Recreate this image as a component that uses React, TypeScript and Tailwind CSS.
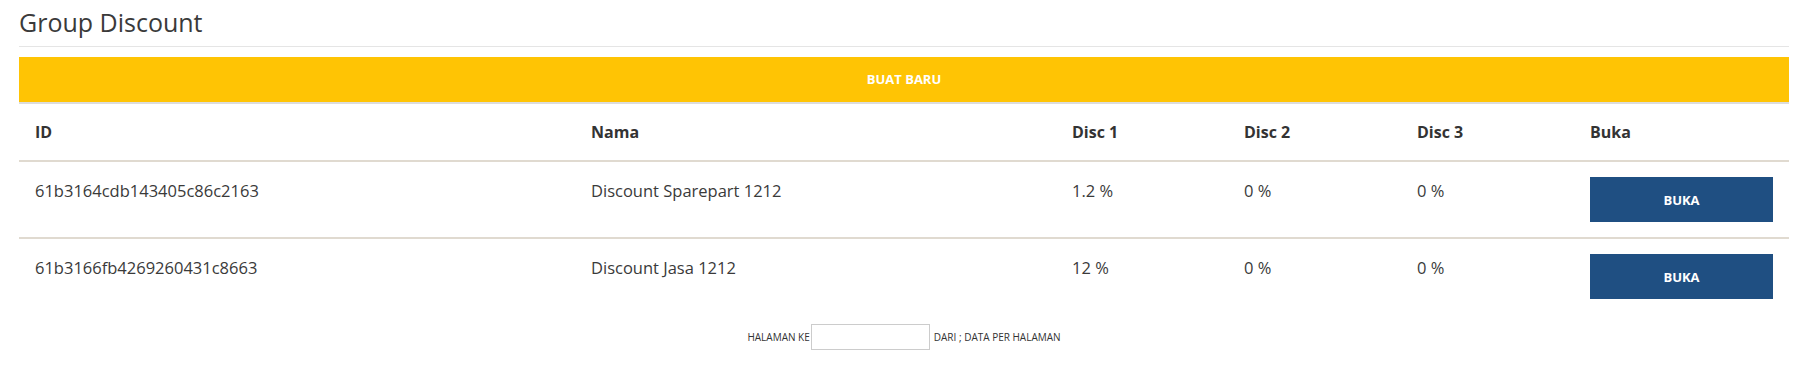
import React from 'react'

interface DiscountRow {
    id: string;
    nama: string;
    disc1: string;
    disc2: string;
    disc3: string;
}

const rows: DiscountRow[] = [
    { id: '61b3164cdb143405c86c2163', nama: 'Discount Sparepart 1212', disc1: '1.2 %', disc2: '0 %', disc3: '0 %' },
    { id: '61b3166fb4269260431c8663', nama: 'Discount Jasa 1212', disc1: '12 %', disc2: '0 %', disc3: '0 %' },
]

export default function App() {
    return (
        <div className="min-h-screen bg-white px-[19px] pt-[6px] text-[#333] font-['Open_Sans',_'Liberation_Sans',_sans-serif]">
            <h1 className="text-[25px] leading-[32px] font-normal text-[#3a3a3a] mb-[8px]">Group Discount</h1>
            <hr className="border-0 border-t border-[#e5e5e5]" />

            {/* Create button */}
            <button className="mt-[10px] w-full h-[47px] bg-[#ffc404] border-b-2 border-[#dcdcdc] text-white text-[13px] font-bold">
                BUAT BARU
            </button>

            <table className="w-full table-fixed border-collapse">
                <colgroup>
                    <col className="w-[556px]" />
                    <col className="w-[481px]" />
                    <col className="w-[172px]" />
                    <col className="w-[173px]" />
                    <col className="w-[173px]" />
                    <col className="w-[215px]" />
                </colgroup>
                <thead>
                    <tr className="border-b-2 border-[#e0dad0] h-[57px] text-left text-[16px] font-bold">
                        <th className="px-[16px] align-middle">ID</th>
                        <th className="px-[16px] align-middle">Nama</th>
                        <th className="px-[16px] align-middle">Disc 1</th>
                        <th className="px-[16px] align-middle">Disc 2</th>
                        <th className="px-[16px] align-middle">Disc 3</th>
                        <th className="px-[16px] align-middle">Buka</th>
                    </tr>
                </thead>
                <tbody className="text-[16.5px] leading-[24px] text-[#3a3a3a]">
                    {rows.map((r, i) => (
                        <tr key={r.id} className={i < rows.length - 1 ? 'border-b-2 border-[#e0dad0]' : ''}>
                            <td className="px-[16px] pt-[17px] align-top">{r.id}</td>
                            <td className="px-[16px] pt-[17px] align-top">{r.nama}</td>
                            <td className="px-[16px] pt-[17px] align-top">{r.disc1}</td>
                            <td className="px-[16px] pt-[17px] align-top">{r.disc2}</td>
                            <td className="px-[16px] pt-[17px] align-top">{r.disc3}</td>
                            <td className="px-[16px] py-[15px] align-top">
                                <button className="w-full h-[45px] bg-[#1f4f82] text-white text-[13px] font-bold">BUKA</button>
                            </td>
                        </tr>
                    ))}
                </tbody>
            </table>

            {/* Pagination */}
            <div className="mt-[10px] flex items-center justify-center text-[10px] text-[#333]">
                <span>HALAMAN KE</span>
                <input type="text" className="ml-[1px] w-[119px] h-[26px] border border-[#ccc] bg-white outline-none" />
                <span className="ml-[4px]">DARI ; DATA PER HALAMAN</span>
            </div>
        </div>
    )
}
